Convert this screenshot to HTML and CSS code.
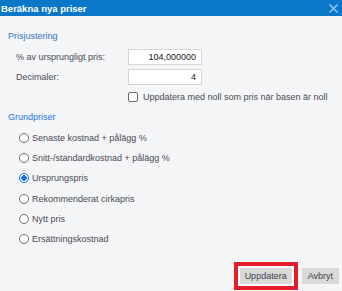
FILE: index.html
```html
<!DOCTYPE html>
<html lang="sv">
<head>
    <meta charset="UTF-8">
    <meta name="viewport" content="width=device-width, initial-scale=1.0">
    <title>Beräkna nya priser</title>
    <link rel="stylesheet" href="styles.css">
</head>
<body>
    <div class="dialog">
        <div class="dialog-header">
            <span class="dialog-title">Beräkna nya priser</span>
            <svg class="close-icon" width="9" height="9" viewBox="0 0 9 9">
                <path d="M0.5 0.5 L8.5 8.5 M8.5 0.5 L0.5 8.5" stroke="#9fc9ec" stroke-width="1.4"/>
            </svg>
        </div>

        <div class="dialog-body">
            <div class="section-title first">Prisjustering</div>
            <div class="form-grid">
                <label for="percent">% av ursprungligt pris:</label>
                <input type="text" id="percent" value="104,000000">
                <label for="decimals">Decimaler:</label>
                <input type="text" id="decimals" value="4">
            </div>
            <label class="check-row">
                <span class="checkbox"></span>
                Uppdatera med noll som pris när basen är noll
            </label>

            <div class="section-title base">Grundpriser</div>
            <div class="radio-list">
                <label class="radio-row"><span class="radio"></span>Senaste kostnad + pålägg %</label>
                <label class="radio-row"><span class="radio"></span>Snitt-/standardkostnad + pålägg %</label>
                <label class="radio-row"><span class="radio checked"></span>Ursprungspris</label>
                <label class="radio-row"><span class="radio"></span>Rekommenderat cirkapris</label>
                <label class="radio-row"><span class="radio"></span>Nytt pris</label>
                <label class="radio-row"><span class="radio"></span>Ersättningskostnad</label>
            </div>
        </div>

        <div class="dialog-footer">
            <button class="btn highlighted">Uppdatera</button>
            <button class="btn">Avbryt</button>
        </div>
    </div>
</body>
</html>
```

FILE: styles.css
```css
* {
    margin: 0;
    padding: 0;
    box-sizing: border-box;
    font-family: "Liberation Sans", Arial, sans-serif;
}

body {
    background-color: #f4f5f7;
    font-size: 9px;
    color: #4a4a55;
}

.dialog {
    display: flex;
    flex-direction: column;
    min-height: 100vh;
}

.dialog-header {
    height: 16px;
    background-color: #0b77c8;
    display: flex;
    justify-content: space-between;
    align-items: center;
    padding: 0 4px 0 1px;
}

.dialog-title {
    color: #ffffff;
    font-weight: bold;
    font-size: 9.5px;
}

.close-icon {
    display: block;
}

.dialog-body {
    padding: 0 8px;
}

.section-title {
    height: 12px;
    line-height: 12px;
    font-size: 9px;
}

.section-title.first {
    margin-top: 14px;
    color: #3a74c2;
}

.section-title.base {
    margin-top: 9px;
    color: #1d78e0;
}

.form-grid {
    display: grid;
    grid-template-columns: 112px 74px;
    row-gap: 4px;
    margin-top: 7px;
    padding-left: 8px;
    align-items: center;
}

.form-grid input {
    height: 16px;
    border: 1px solid #d4d6da;
    background-color: #ffffff;
    text-align: right;
    padding: 0 5px;
    font-size: 9px;
    color: #222222;
}

.check-row {
    display: flex;
    align-items: center;
    gap: 5px;
    margin-top: 7px;
    margin-left: 120px;
    height: 10px;
}

.checkbox {
    width: 10px;
    height: 10px;
    border: 1px solid #6b6b6b;
    border-radius: 2px;
    background-color: #ffffff;
}

.radio-list {
    margin-top: 5px;
    padding-left: 11px;
}

.radio-row {
    display: flex;
    align-items: center;
    gap: 3px;
    height: 20.2px;
}

.radio {
    width: 10px;
    height: 10px;
    border: 1px solid #707070;
    border-radius: 50%;
    background-color: #ffffff;
}

.radio.checked {
    border-color: #1a73e8;
    background: radial-gradient(circle, #1a73e8 0, #1a73e8 2.6px, #ffffff 3px);
}

.dialog-footer {
    margin-top: auto;
    display: flex;
    justify-content: flex-end;
    gap: 10px;
    padding: 0 3px 7px 0;
}

.btn {
    height: 16px;
    border: none;
    background-color: #d9d9d9;
    color: #444444;
    font-size: 9px;
    padding: 0 6px;
}

.btn.highlighted {
    padding: 0 5px;
    box-shadow: 0 0 0 2px #ffffff, 0 0 0 6px #e41e2b;
}
```
